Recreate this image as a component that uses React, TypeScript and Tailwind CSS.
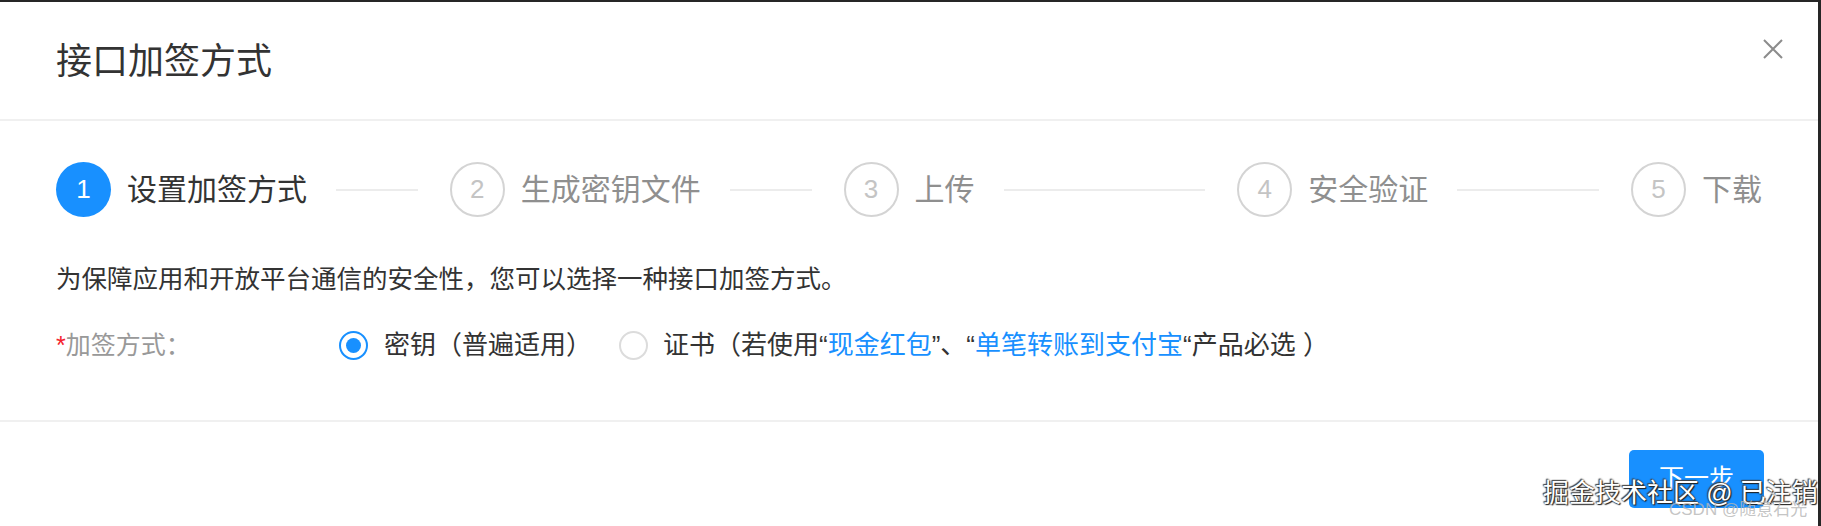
const steps = ["设置加签方式", "生成密钥文件", "上传", "安全验证", "下载"];

const StepItem = ({ index, label, last }: { index: number; label: string; last: boolean }) => {
  const active = index === 0;
  return (
    <div className={last ? "flex flex-none items-center" : "flex min-w-0 flex-1 basis-0 items-center pr-[32px]"}>
      <div
        className={
          active
            ? "flex h-[55px] w-[55px] shrink-0 items-center justify-center rounded-full bg-[#1890ff] text-[26px] text-white"
            : "flex h-[55px] w-[55px] shrink-0 items-center justify-center rounded-full border-2 border-[#d4d4d4] text-[26px] text-[#c4c4c4]"
        }
      >
        {index + 1}
      </div>
      <span className={active ? "ml-[16px] whitespace-nowrap text-[30px] text-[#333]" : "ml-[16px] whitespace-nowrap text-[30px] text-[#8f8f8f]"}>
        {label}
      </span>
      {/* tail line */}
      {!last && <div className="ml-[29px] h-[2px] flex-1 bg-[#ececec]" />}
    </div>
  );
};

const App = () => {
  return (
    <div className="relative h-[526px] w-full bg-[#262626] pt-[2px] pr-[3px] font-['Liberation_Sans','Noto_Sans_CJK_SC',sans-serif]">
      <div className="flex h-full flex-col bg-white">
        {/* Header */}
        <header className="flex h-[119px] shrink-0 items-center justify-between border-b-2 border-[#f0f0f0] pl-[56px] pr-[34px]">
          <h1 className="mt-[3px] text-[36px] text-[#333]">接口加签方式</h1>
          <svg width="22" height="22" viewBox="0 0 22 22" fill="none" stroke="#8c8c8c" strokeWidth="2" className="mb-[24px]">
            <path d="M2 2L20 20M20 2L2 20" />
          </svg>
        </header>

        {/* Body */}
        <div className="h-[301px] shrink-0 border-b-2 border-[#f0f0f0] px-[56px] pt-[41px]">
          <div className="flex items-center">
            {steps.map((label, i) => (
              <StepItem key={label} index={i} label={label} last={i === steps.length - 1} />
            ))}
          </div>

          <p className="mt-[44px] text-[25.5px] leading-[36px] text-[#333]">
            为保障应用和开放平台通信的安全性，您可以选择一种接口加签方式。
          </p>

          <div className="mt-[30px] flex items-center text-[26px] leading-[36px]">
            <div className="w-[283px] shrink-0 text-[25px] text-[#999]">
              <span className="text-[#f5222d]">*</span>加签方式：
            </div>
            <label className="flex items-center">
              <span className="flex h-[29px] w-[29px] items-center justify-center rounded-full border-2 border-[#1890ff]">
                <span className="h-[15px] w-[15px] rounded-full bg-[#1890ff]" />
              </span>
              <span className="ml-[16px] text-[#333]">密钥（普遍适用）</span>
            </label>
            <label className="ml-[27px] flex items-center">
              <span className="h-[29px] w-[29px] rounded-full border-2 border-[#dcdcdc]" />
              <span className="ml-[15px] text-[#333]">
                证书（若使用“<span className="text-[#1890ff]">现金红包</span>”、“
                <span className="text-[#1890ff]">单笔转账到支付宝</span>“产品必选 ）
              </span>
            </label>
          </div>
        </div>

        {/* Footer */}
        <footer className="flex flex-1 items-start justify-end pr-[54px] pt-[28px]">
          <button className="h-[58px] w-[135px] rounded-[5px] bg-[#1890ff] text-[25px] text-white">下一步</button>
        </footer>
      </div>

      {/* Watermarks */}
      <div className="absolute left-[1543px] top-[477px] whitespace-nowrap text-[26px] leading-[32px] text-white [text-shadow:1px_1px_1px_#222,-1px_-1px_1px_#444,0_0_2px_#000]">
        掘金技术社区 @ 已注销
      </div>
      <div className="absolute left-[1669px] top-[500px] whitespace-nowrap text-[17px] leading-[20px] text-[#b5b5b5]/80">
        CSDN @随意石光
      </div>
    </div>
  );
};

export default App;
